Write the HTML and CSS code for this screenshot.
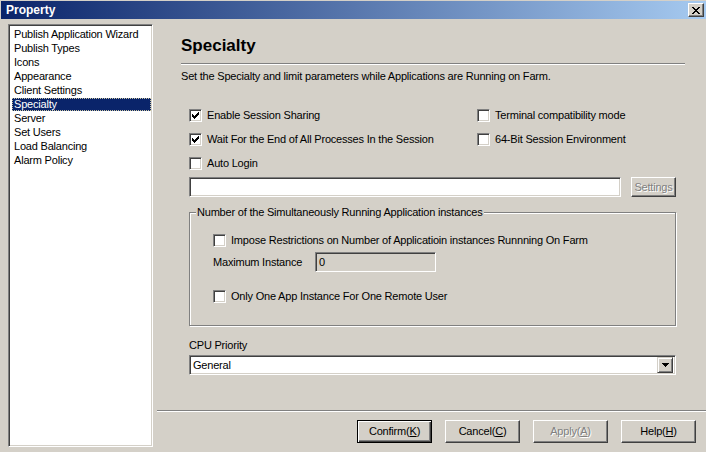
FILE: index.html
```html
<!DOCTYPE html>
<html>
<head>
<meta charset="utf-8">
<title>Property</title>
<link rel="stylesheet" href="styles.css">
</head>
<body>
<div class="window">
  <div class="titlebar">
    <span class="title">Property</span>
    <span class="close">
      <svg width="8" height="7" viewBox="0 0 8 7" shape-rendering="crispEdges">
        <rect x="0" y="0" width="2" height="1"/><rect x="6" y="0" width="2" height="1"/>
        <rect x="1" y="1" width="2" height="1"/><rect x="5" y="1" width="2" height="1"/>
        <rect x="2" y="2" width="4" height="1"/>
        <rect x="3" y="3" width="2" height="1"/>
        <rect x="2" y="4" width="4" height="1"/>
        <rect x="1" y="5" width="2" height="1"/><rect x="5" y="5" width="2" height="1"/>
        <rect x="0" y="6" width="2" height="1"/><rect x="6" y="6" width="2" height="1"/>
      </svg>
    </span>
  </div>
  <div class="main">
    <ul class="nav">
      <li>Publish Application Wizard</li>
      <li>Publish Types</li>
      <li>Icons</li>
      <li>Appearance</li>
      <li>Client Settings</li>
      <li class="sel">Specialty</li>
      <li>Server</li>
      <li>Set Users</li>
      <li>Load Balancing</li>
      <li>Alarm Policy</li>
    </ul>
    <div class="panel">
      <div class="content">
        <h1 class="heading">Specialty</h1>
        <div class="rule"></div>
        <p class="desc">Set the Specialty and limit parameters while Applications are Running on Farm.</p>
        <div class="controls">
          <div class="opts">
            <div class="col col-left">
              <div class="cb"><span class="box"><svg class="check" width="7" height="7" viewBox="0 0 7 7" shape-rendering="crispEdges"><rect x="0" y="2" width="1" height="3"/><rect x="1" y="3" width="1" height="3"/><rect x="2" y="4" width="1" height="3"/><rect x="3" y="3" width="1" height="3"/><rect x="4" y="2" width="1" height="3"/><rect x="5" y="1" width="1" height="3"/><rect x="6" y="0" width="1" height="3"/></svg></span>Enable Session Sharing</div>
              <div class="cb"><span class="box"><svg class="check" width="7" height="7" viewBox="0 0 7 7" shape-rendering="crispEdges"><rect x="0" y="2" width="1" height="3"/><rect x="1" y="3" width="1" height="3"/><rect x="2" y="4" width="1" height="3"/><rect x="3" y="3" width="1" height="3"/><rect x="4" y="2" width="1" height="3"/><rect x="5" y="1" width="1" height="3"/><rect x="6" y="0" width="1" height="3"/></svg></span>Wait For the End of All Processes In the Session</div>
              <div class="cb"><span class="box"></span>Auto Login</div>
            </div>
            <div class="col">
              <div class="cb"><span class="box"></span>Terminal compatibility mode</div>
              <div class="cb"><span class="box"></span>64-Bit Session Environment</div>
            </div>
          </div>
          <div class="pathrow">
            <div class="field field-path"></div>
            <button class="btn btn-settings disabled">Settings</button>
          </div>
          <div class="group">
            <div class="legend">Number of the Simultaneously Running Application instances</div>
            <div class="group-body">
              <div class="cb cb-first"><span class="box"></span>Impose Restrictions on Number of Applicatioin instances Runnning On Farm</div>
              <div class="maxrow">
                <span class="maxlabel">Maximum Instance</span>
                <div class="field field-max">0</div>
              </div>
              <div class="cb cb-last"><span class="box"></span>Only One App Instance For One Remote User</div>
            </div>
          </div>
          <div class="cpu-label">CPU Priority</div>
          <div class="select">
            <span class="select-text">General</span>
            <span class="drop">
              <svg width="7" height="4" viewBox="0 0 7 4" shape-rendering="crispEdges"><rect x="0" y="0" width="7" height="1"/><rect x="1" y="1" width="5" height="1"/><rect x="2" y="2" width="3" height="1"/><rect x="3" y="3" width="1" height="1"/></svg>
            </span>
          </div>
        </div>
      </div>
      <div class="footer">
        <div class="sep"></div>
        <div class="btns">
          <button class="btn btn-default">Confirm(<u>K</u>)</button>
          <button class="btn">Cancel(<u>C</u>)</button>
          <button class="btn disabled">Apply(<u>A</u>)</button>
          <button class="btn">Help(<u>H</u>)</button>
        </div>
      </div>
    </div>
  </div>
</div>
</body>
</html>
```

FILE: styles.css
```css
* { box-sizing: border-box; }
html, body { margin: 0; padding: 0; }
body {
  width: 706px;
  height: 452px;
  overflow: hidden;
  background: #d4d0c8;
  font-family: "Liberation Sans", Arial, sans-serif;
  font-size: 11px;
  letter-spacing: -0.2px;
  color: #000;
}
.window {
  width: 706px;
  height: 452px;
  display: flex;
  flex-direction: column;
}
.titlebar {
  margin: 1px 0 0 1px;
  height: 18px;
  flex: none;
  background: linear-gradient(to right, #0a246a, #a6caf0);
  display: flex;
  align-items: center;
  justify-content: space-between;
  padding: 0 2px 0 5px;
}
.title {
  color: #fff;
  font-weight: bold;
  font-size: 12px;
  line-height: 14px;
  letter-spacing: 0;
}
.close {
  width: 16px;
  height: 14px;
  background: #d4d0c8;
  border: 1px solid;
  border-color: #fff #404040 #404040 #fff;
  box-shadow: inset -1px -1px 0 #808080;
  display: flex;
  align-items: center;
  justify-content: center;
}
.close svg { fill: #000; display: block; }

.main {
  flex: 1;
  display: flex;
  padding: 5px 0 5px 8px;
}
.nav {
  width: 145px;
  margin: 0;
  list-style: none;
  background: #fff;
  border: 1px solid;
  border-color: #808080 #fff #fff #808080;
  box-shadow: inset 1px 1px 0 #404040, inset -1px -1px 0 #d4d0c8;
  padding: 3px 1px 0 3px;
  flex: none;
}
.nav li {
  height: 13px;
  line-height: 13px;
  margin-bottom: 1px;
  padding-left: 2px;
  white-space: nowrap;
}
.nav li.sel {
  background: #0a246a;
  color: #fff;
  outline: 1px dotted #c8c4a0;
  outline-offset: -1px;
}

.panel {
  flex: 1;
  display: flex;
  flex-direction: column;
}
.content {
  padding: 0 21px 0 28px;
}
.heading {
  margin: 12px 0 0;
  font-size: 17px;
  line-height: 20px;
  font-weight: bold;
  letter-spacing: 0;
}
.rule {
  margin-top: 7px;
  height: 2px;
  border-top: 1px solid #808080;
  border-bottom: 1px solid #fff;
}
.desc {
  margin: 5px 0 0;
  line-height: 13px;
  white-space: nowrap;
}
.controls {
  margin: 0 8px 0 8px;
}
.opts {
  display: flex;
  margin-top: 26px;
}
.col {
  display: flex;
  flex-direction: column;
  gap: 11px;
}
.col-left { width: 288px; }
.cb {
  display: flex;
  align-items: center;
  gap: 5px;
  height: 13px;
  line-height: 13px;
  white-space: nowrap;
}
.box {
  width: 13px;
  height: 13px;
  flex: none;
  background: #fff;
  border: 1px solid;
  border-color: #808080 #fff #fff #808080;
  box-shadow: inset 1px 1px 0 #404040, inset -1px -1px 0 #d4d0c8;
  display: flex;
  align-items: center;
  justify-content: center;
}
.check { display: block; fill: #000; }

.field {
  height: 20px;
  background: #fff;
  border: 1px solid;
  border-color: #808080 #fff #fff #808080;
  box-shadow: inset 1px 1px 0 #404040, inset -1px -1px 0 #d4d0c8;
}
.pathrow {
  display: flex;
  gap: 10px;
  margin-top: 7px;
}
.field-path { width: 432px; }

.btn {
  font: inherit;
  letter-spacing: inherit;
  color: #000;
  background: #d4d0c8;
  border: 1px solid;
  border-color: #fff #404040 #404040 #fff;
  box-shadow: inset -1px -1px 0 #808080;
  padding: 0;
  margin: 0;
  width: 75px;
  height: 23px;
  line-height: 13px;
  text-align: center;
}
.btn u { text-decoration: underline; text-underline-offset: 1px; }
.btn.disabled {
  color: #808080;
  text-shadow: 1px 1px 0 #fff;
}
.btn-settings {
  width: 45px;
  height: 20px;
}
.btn-default {
  border: 1px solid #000;
  box-shadow: inset 1px 1px 0 #fff, inset -1px -1px 0 #404040, inset -2px -2px 0 #808080;
}

.group {
  margin-top: 15px;
  width: 487px;
  height: 114px;
  border: 1px solid #808080;
  box-shadow: inset 1px 1px 0 #fff, 1px 1px 0 #fff;
  display: flex;
  flex-direction: column;
  align-items: flex-start;
}
.legend {
  margin: -7px 0 0 6px;
  padding: 0 1px;
  line-height: 13px;
  background: #d4d0c8;
  white-space: nowrap;
}
.group-body {
  padding-left: 23px;
}
.cb-first { margin-top: 15px; }
.maxrow {
  display: flex;
  align-items: center;
  margin-top: 5px;
}
.maxlabel { width: 102px; line-height: 13px; }
.field-max {
  width: 121px;
  background: #d4d0c8;
  padding-left: 3px;
  line-height: 18px;
}
.cb-last { margin-top: 18px; }

.cpu-label {
  margin-top: 13px;
  line-height: 13px;
}
.select {
  margin-top: 3px;
  width: 487px;
  height: 20px;
  background: #fff;
  border: 1px solid;
  border-color: #808080 #fff #fff #808080;
  box-shadow: inset 1px 1px 0 #404040, inset -1px -1px 0 #d4d0c8;
  display: flex;
  align-items: center;
  justify-content: space-between;
  padding: 0 2px 0 3px;
}
.select-text { line-height: 13px; }
.drop {
  width: 16px;
  height: 16px;
  background: #d4d0c8;
  border: 1px solid;
  border-color: #d4d0c8 #404040 #404040 #d4d0c8;
  box-shadow: inset 1px 1px 0 #fff, inset -1px -1px 0 #808080;
  display: flex;
  align-items: center;
  justify-content: center;
}
.drop svg { display: block; fill: #000; }

.footer {
  margin-top: auto;
  padding-bottom: 4px;
}
.sep {
  margin-left: 4px;
  height: 2px;
  border-top: 1px solid #808080;
  border-bottom: 1px solid #fff;
}
.btns {
  display: flex;
  justify-content: flex-end;
  gap: 13px;
  padding-right: 10px;
  margin-top: 8px;
}
```
